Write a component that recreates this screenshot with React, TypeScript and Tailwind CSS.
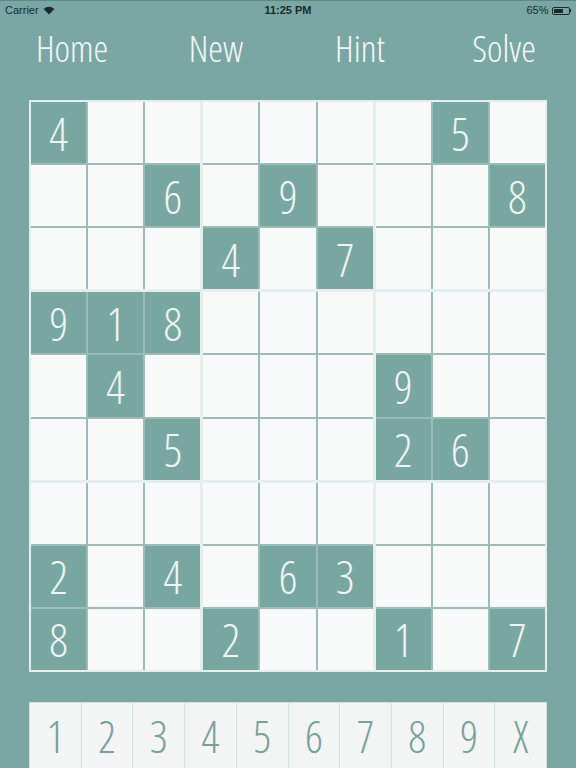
import React from "react";

const G: (number | null)[][] = [
  [4, null, null, null, null, null, null, 5, null],
  [null, null, 6, null, 9, null, null, null, 8],
  [null, null, null, 4, null, 7, null, null, null],
  [9, 1, 8, null, null, null, null, null, null],
  [null, 4, null, null, null, null, 9, null, null],
  [null, null, 5, null, null, null, 2, 6, null],
  [null, null, null, null, null, null, null, null, null],
  [2, null, 4, null, 6, 3, null, null, null],
  [8, null, null, 2, null, null, 1, null, 7],
];

function Block({ br, bc }: { br: number; bc: number }) {
  const cells = [];
  for (let r = 0; r < 3; r++) {
    for (let c = 0; c < 3; c++) {
      const v = G[br * 3 + r][bc * 3 + c];
      cells.push(
        <div
          key={`${r}-${c}`}
          className={`flex items-center justify-center text-[46px] leading-none font-light font-stretch-condensed ${
            v ? "bg-[#78a6a1] text-[#eef5f4]" : "bg-[#f8f9f9]"
          }`}
        >
          {v ?? ""}
        </div>
      );
    }
  }
  return (
    <div className="grid grid-cols-3 grid-rows-3 gap-[2px] bg-[#9dbcb8]">{cells}</div>
  );
}

export default function App() {
  return (
    <div
      className="w-[576px] h-[768px] bg-[#7aa7a3] flex flex-col overflow-hidden"
      style={{ fontFamily: '"Open Sans", "Liberation Sans", sans-serif' }}
    >
      {/* status bar */}
      <div
        className="h-5 flex items-center px-[5px] text-[11px] text-[#1d2b2a] border-t border-[#5f8884]"
        style={{ fontFamily: '"Liberation Sans", Arial, sans-serif' }}
      >
        <div className="flex-1 flex items-center gap-1">
          <span>Carrier</span>
          <svg width="12" height="9" viewBox="0 0 12 9">
            <path d="M6 8.5 L0.6 3 A7.8 7.8 0 0 1 11.4 3 Z" fill="#1d2b2a" />
          </svg>
        </div>
        <div className="flex-1 text-center font-bold">11:25 PM</div>
        <div className="flex-1 flex items-center justify-end gap-[3px]">
          <span>65%</span>
          <div className="flex items-center">
            <div className="w-[18px] h-[8px] border border-[#1d2b2a] rounded-[2px] p-[1px]">
              <div className="w-[65%] h-full bg-[#1d2b2a]" />
            </div>
            <div className="w-[1.5px] h-[3px] bg-[#1d2b2a]" />
          </div>
        </div>
      </div>

      {/* header */}
      <div className="h-[54px] grid grid-cols-4 items-center text-[#f4f8f8] text-[37px] leading-none font-light font-stretch-condensed">
        <div className="text-center">Home</div>
        <div className="text-center">New</div>
        <div className="text-center">Hint</div>
        <div className="text-center">Solve</div>
      </div>

      {/* grid */}
      <div className="mt-[26px] mx-[29px] h-[572px] border border-[#e4efed] bg-[#e4efed] p-[1px] grid grid-cols-3 grid-rows-3 gap-[3px]">
        {[0, 1, 2].map((br) =>
          [0, 1, 2].map((bc) => <Block key={`${br}-${bc}`} br={br} bc={bc} />)
        )}
      </div>

      {/* number bar */}
      <div className="mt-[30px] mx-[29px] flex-1 grid grid-cols-10 gap-[1px] bg-[#d3e1df] border border-[#d3e1df] border-b-0">
        {["1", "2", "3", "4", "5", "6", "7", "8", "9", "X"].map((n) => (
          <div
            key={n}
            className="bg-[#f3f5f5] flex items-center justify-center text-[#7aa09c] text-[44px] leading-none font-light font-stretch-condensed"
          >
            {n}
          </div>
        ))}
      </div>
    </div>
  );
}
